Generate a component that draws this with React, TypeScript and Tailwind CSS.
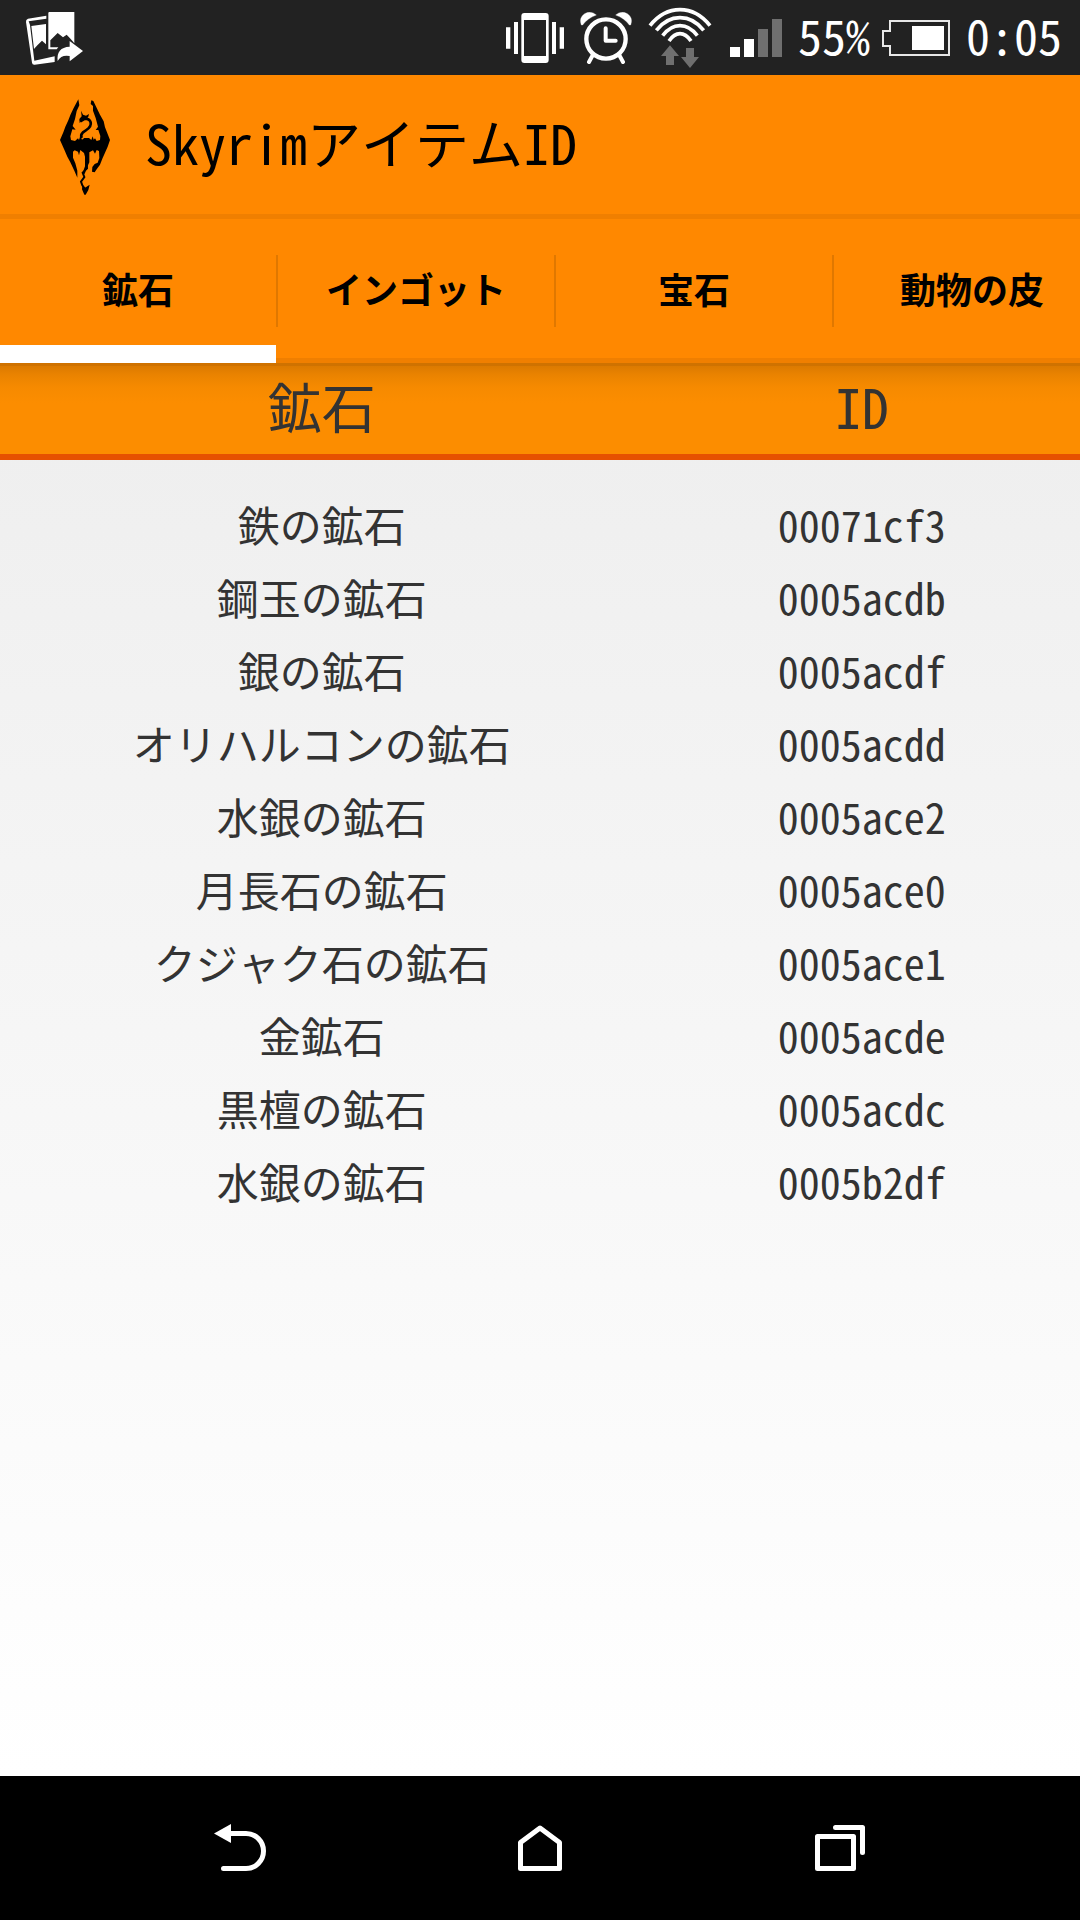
const font = "font-['Noto_Sans_Mono_CJK_JP','Noto_Sans_CJK_JP',monospace]";

const tabs = ["鉱石", "インゴット", "宝石", "動物の皮"];

const items = [
  { name: "鉄の鉱石", id: "00071cf3" },
  { name: "鋼玉の鉱石", id: "0005acdb" },
  { name: "銀の鉱石", id: "0005acdf" },
  { name: "オリハルコンの鉱石", id: "0005acdd" },
  { name: "水銀の鉱石", id: "0005ace2" },
  { name: "月長石の鉱石", id: "0005ace0" },
  { name: "クジャク石の鉱石", id: "0005ace1" },
  { name: "金鉱石", id: "0005acde" },
  { name: "黒檀の鉱石", id: "0005acdc" },
  { name: "水銀の鉱石", id: "0005b2df" },
];

function GalleryIcon() {
  return (
    <svg width="58" height="54" viewBox="75 33 174 162" fill="#fff" aria-hidden="true">
      <path d="M139 47V56L86 64L90 75L103 182L164 169V186L104 194Q97 195 96 188L78 66Q77 58 84 56Z" />
      <path d="M94 78L138 72V133L126 122L112 136L102 147Z" />
      <path
        fillRule="evenodd"
        d="M147 36H223V130L218 124L212 117L200 104L189 112L173 99L151 121V142H175L170 148H145V38Z"
      />
      <path d="M209 123L249 153L209 184V168Q184 163 173 183Q168 142 209 140Z" />
    </svg>
  );
}

function VibrateIcon() {
  return (
    <svg width="58" height="50" viewBox="45 36 174 150" fill="#fff" aria-hidden="true">
      <path
        fillRule="evenodd"
        d="M100 36H164Q173 36 173 45V177Q173 186 164 186H100Q91 186 91 177V45Q91 36 100 36ZM99 57V165H165V57Z"
      />
      <path d="M69 63H81V159H69ZM183 63H195V159H183ZM45 79H58V143H45ZM206 79H219V143H206Z" />
    </svg>
  );
}

function AlarmIcon() {
  return (
    <svg width="52" height="52" viewBox="270 33 156 156" fill="none" stroke="#fff" aria-hidden="true">
      <circle cx="348" cy="114" r="59" strokeWidth="13" />
      <path d="M347 82V119H377" strokeWidth="12" strokeLinecap="round" strokeLinejoin="round" />
      <path d="M308 163L297 183M388 163L399 183" strokeWidth="12" strokeLinecap="round" />
      <path
        d="M274 72Q266 50 284 38Q303 28 319 42Q292 52 278 72ZM422 72Q430 50 412 38Q393 28 377 42Q404 52 418 72Z"
        fill="#fff"
      />
    </svg>
  );
}

function WifiIcon() {
  return (
    <svg width="66" height="62" viewBox="474 21 198 186" fill="none" aria-hidden="true">
      <g stroke="#fff" strokeWidth="11">
        <path d="M480 77Q518 29 570 29Q622 29 660 77" />
        <path d="M499 91Q529 53 570 53Q611 53 641 91" />
        <path d="M518 107Q541 77 570 77Q599 77 622 107" />
        <path d="M537 123Q552 101 570 101Q588 101 603 123" />
      </g>
      <path d="M540 136L567 168H552V195H528V168H513ZM588 144H612V171H627L600 204L573 171H588Z" fill="#6f6f6f" />
    </svg>
  );
}

function SignalIcon() {
  return (
    <svg width="52" height="38" viewBox="0 0 52 38" aria-hidden="true">
      <path d="M0 28H10V38H0ZM14 20H24V38H14Z" fill="#fff" />
      <path d="M28 10H38V38H28ZM42 0H52V38H42Z" fill="#6f6f6f" />
    </svg>
  );
}

function BatteryIcon() {
  return (
    <svg width="68" height="36" viewBox="0 0 68 36" aria-hidden="true">
      <path d="M8 1H67V35H8V26H1V11H8Z" fill="none" stroke="#e8e8e8" strokeWidth="2" />
      <path d="M30 6H62V30H30Z" fill="#fff" />
    </svg>
  );
}

function DragonLogo() {
  return (
    <svg width="50" height="96" viewBox="60 55 150 288" aria-hidden="true">
      <path d="M115 56L118 74L110 91L105 115L98 136L107 147L97 146L91 167L93 178L105 181L114 173L117 178L121 165L126 177L133 172H147L154 178L158 167L161 177L165 173L170 181L180 178L181 166L175 148L167 148L174 138L167 112L159 90V76L152 70L154 59L160 61L180 102L191 122L195 140L210 178L203 198L195 216L187 234L180 252L171 264L164 275L156 273L157 259L164 250L173 246L178 232L177 211L170 208L165 219L159 209L148 215V245L140 263L134 280L128 276L135 257V228L132 217L121 208L117 224L114 213L104 209L99 213V231L106 248L112 270V291L103 270L91 245L82 228L73 207L60 178L70 155L76 138L85 119L92 101L101 82Z" />
      <path
        d="M125 172Q121 162 128 156L139 148Q155 137 152 125Q149 114 135 114L121 122"
        fill="none"
        stroke="#000"
        strokeWidth="8"
      />
      <path d="M123 90L129 102L138 105L147 100L145 108L137 117L127 117L119 127L118 115L125 107Z" />
      <path
        d="M140 240L141 263L128 276L133 289L123 303L127 314L135 325"
        fill="none"
        stroke="#000"
        strokeWidth="6"
      />
      <path d="M127 315L135 321L149 312L145 328L137 342H133L126 326Z" />
    </svg>
  );
}

function StatusBar() {
  return (
    <div className="flex h-[75px] items-center justify-between bg-[#222] pr-[18px] pl-[25px] text-[48px] leading-[48px] text-white">
      <GalleryIcon />
      <div className="flex items-center gap-4">
        <VibrateIcon />
        <AlarmIcon />
        <WifiIcon />
        <SignalIcon />
        <div className="flex items-center gap-3">
          <span className="pb-2">55%</span>
          <BatteryIcon />
        </div>
        <span className="pb-2">0:05</span>
      </div>
    </div>
  );
}

function NavBar() {
  return (
    <nav className="flex h-36 justify-center bg-black">
      <button className="flex max-w-[300px] flex-1 items-center justify-center" aria-label="戻る">
        <svg width="52" height="48" viewBox="0 0 52 48" fill="none" aria-hidden="true">
          <path d="M16 9.5H32a17.5 17.5 0 0 1 0 35H9.5" stroke="#fff" strokeWidth="5" strokeLinecap="round" />
          <path d="M0 9.5L17 0V19Z" fill="#fff" />
        </svg>
      </button>
      <button className="flex max-w-[300px] flex-1 items-center justify-center" aria-label="ホーム">
        <svg width="44" height="48" viewBox="0 0 44 48" fill="none" aria-hidden="true">
          <path d="M22 4L41.5 18.5V44.5H2.5V18.5Z" stroke="#fff" strokeWidth="5" strokeLinejoin="round" />
        </svg>
      </button>
      <button className="flex max-w-[300px] flex-1 items-center justify-center" aria-label="履歴">
        <svg width="50" height="48" viewBox="0 0 50 48" fill="none" aria-hidden="true">
          <path
            d="M2.5 12.5H38.5V44.5H2.5ZM20.5 3.5H47.5V28.5"
            stroke="#fff"
            strokeWidth="5"
            strokeLinecap="round"
            strokeLinejoin="round"
          />
        </svg>
      </button>
    </nav>
  );
}

export default function App() {
  return (
    <div className={`flex min-h-screen flex-col overflow-hidden ${font}`}>
      <StatusBar />

      <header className="bg-[#ff8800]">
        <div className="flex h-36 items-center gap-[35px] pl-[60px] shadow-[inset_0_-5px_#f07f00]">
          <DragonLogo />
          <h1 className="pb-[10px] text-[54px] leading-[54px] whitespace-nowrap text-black">SkyrimアイテムID</h1>
        </div>
        <div role="tablist" className="flex h-36 overflow-hidden">
          {tabs.map((tab, i) => (
            <div key={tab} className="flex shrink-0 items-stretch">
              <button
                role="tab"
                aria-selected={i === 0}
                className={`w-[276px] text-[36px] leading-[36px] font-bold text-black ${
                  i === 0 ? "border-b-[18px] border-white pt-3" : "border-b-[5px] border-[#f07f00] pb-px"
                }`}
              >
                {tab}
              </button>
              <div className="flex w-[2px] items-center border-b-[5px] border-[#f07f00] pt-[5px]">
                <div className="h-[72px] w-full bg-[#e07800]" />
              </div>
            </div>
          ))}
        </div>
      </header>

      <main className="flex-1 bg-linear-to-b from-[#eee] to-white">
        <table className="w-full table-fixed text-center text-[#333]">
          <colgroup>
            <col className="w-[59.6%]" />
            <col />
          </colgroup>
          <thead className="bg-[linear-gradient(#cf7200_3px,#dc7a00_3px,#ea8300_12px,#f68a00_24px,#fc8d00_40px)]">
            <tr className="h-[94px] border-b-[6px] border-[#e65100] text-[54px] leading-[54px]">
              <th className="pb-[5px] font-normal">鉱石</th>
              <th className="pb-[5px] font-normal">ID</th>
            </tr>
          </thead>
          <tbody className="text-[42px] leading-[73px] before:block before:h-[27px]">
            {items.map((item) => (
              <tr key={item.id}>
                <td>{item.name}</td>
                <td>{item.id}</td>
              </tr>
            ))}
          </tbody>
        </table>
      </main>

      <NavBar />
    </div>
  );
}
